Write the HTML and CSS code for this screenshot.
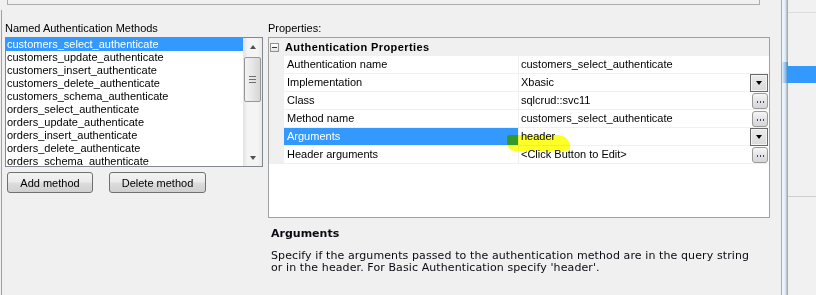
FILE: index.html
```html
<!DOCTYPE html>
<html lang="en">
<head>
  <meta charset="UTF-8" />
  <title>Named Authentication Methods</title>
  <link rel="stylesheet" href="styles.css">
</head>
<body>
  <div class="window">
    <div class="main">
      <div class="topbox"></div>

      <div class="panes">
        <!-- Left: list of methods -->
        <div class="methods">
          <div class="label">Named Authentication Methods</div>
          <div class="listbox">
            <ul class="items">
              <li class="selected">customers_select_authenticate</li>
              <li>customers_update_authenticate</li>
              <li>customers_insert_authenticate</li>
              <li>customers_delete_authenticate</li>
              <li>customers_schema_authenticate</li>
              <li>orders_select_authenticate</li>
              <li>orders_update_authenticate</li>
              <li>orders_insert_authenticate</li>
              <li>orders_delete_authenticate</li>
              <li>orders_schema_authenticate</li>
            </ul>
            <div class="vscroll">
              <div class="arrow"><span class="tri up"></span></div>
              <div class="track"><div class="thumb"><span></span><span></span><span></span></div></div>
              <div class="arrow"><span class="tri down"></span></div>
            </div>
          </div>
          <div class="buttons">
            <button class="btn add">Add method</button>
            <button class="btn delete">Delete method</button>
          </div>
        </div>

        <!-- Right: property grid -->
        <div class="props">
          <div class="label">Properties:</div>
          <div class="grid">
            <div class="category"><span class="toggle"></span>Authentication Properties</div>
            <div class="row">
              <div class="gutter"></div>
              <div class="name">Authentication name</div>
              <div class="value">customers_select_authenticate</div>
            </div>
            <div class="row">
              <div class="gutter"></div>
              <div class="name">Implementation</div>
              <div class="value">Xbasic <span class="drop"><span class="tri down dark"></span></span></div>
            </div>
            <div class="row">
              <div class="gutter"></div>
              <div class="name">Class</div>
              <div class="value">sqlcrud::svc11 <span class="dots"><i></i><i></i><i></i></span></div>
            </div>
            <div class="row">
              <div class="gutter"></div>
              <div class="name">Method name</div>
              <div class="value">customers_select_authenticate <span class="dots"><i></i><i></i><i></i></span></div>
            </div>
            <div class="row selected">
              <div class="gutter"></div>
              <div class="name">Arguments</div>
              <div class="value">header <span class="drop"><span class="tri down dark"></span></span></div>
            </div>
            <div class="row">
              <div class="gutter"></div>
              <div class="name">Header arguments</div>
              <div class="value">&lt;Click Button to Edit&gt; <span class="dots"><i></i><i></i><i></i></span></div>
            </div>
            <!-- highlighter stroke over the value -->
            <div class="marker"></div>
          </div>

          <div class="help">
            <div class="help-title">Arguments</div>
            <p>Specify if the arguments passed to the authentication method are in the query string<br>or in the header. For Basic Authentication specify 'header'.</p>
          </div>
        </div>
      </div>
    </div>

    <div class="splitter"><div class="glow"></div></div>

    <div class="side">
      <div class="side-head"></div>
      <div class="side-sel"></div>
      <div class="side-foot"></div>
    </div>
  </div>
</body>
</html>
```

FILE: styles.css
```css
* {
  box-sizing: border-box;
}

body {
  margin: 0;
  background: #f0f0f0;
  color: #000;
  font-family: "Liberation Sans", Arial, sans-serif;
  font-size: 11px;
}

.window {
  display: flex;
  width: 816px;
  height: 295px;
  overflow: hidden;
}

.main {
  flex: none;
  width: 782px;
  border-right: 1px solid #a9a9a9;
}

.topbox {
  margin-left: 7px;
  width: 753px;
  height: 5px;
  border: 1px solid #adadad;
  border-top: none;
}

.panes {
  display: flex;
  height: 285px;
  margin: 5px 0 0 1px;
  padding-top: 12px;
  border-left: 1px solid #a0a0a0;
}

.label {
  height: 13px;
  line-height: 13px;
  margin-bottom: 2px;
  white-space: nowrap;
}

/* Methods list */
.methods {
  flex: none;
  width: 263px;
  padding-left: 3px;
}

.listbox {
  display: flex;
  width: 258px;
  height: 130px;
  border: 1px solid #828790;
  background: #fff;
}

.items {
  flex: 1;
  margin: 0;
  padding: 0;
  list-style: none;
  overflow: hidden;
}

.items li {
  height: 13px;
  line-height: 13px;
  padding-left: 1px;
  white-space: nowrap;
}

.items li.selected {
  background: #3399ff;
  color: #fff;
}

.vscroll {
  display: flex;
  flex-direction: column;
  width: 19px;
  background: linear-gradient(to right, #e2e2e2, #f4f4f4 25%, #f4f4f4 75%, #e9e9e9);
}

.arrow {
  display: flex;
  align-items: center;
  justify-content: center;
  height: 17px;
}

.track {
  flex: 1;
  padding: 2px 1px 0;
}

.thumb {
  display: flex;
  flex-direction: column;
  align-items: center;
  justify-content: center;
  gap: 2px;
  height: 45px;
  border: 1px solid #979797;
  border-radius: 2px;
  background: linear-gradient(to right, #f3f3f3, #e6e6e6 50%, #d6d6d6);
}

.thumb span {
  width: 7px;
  height: 1px;
  background: #6f6f6f;
}

.tri {
  width: 0;
  height: 0;
  border-left: 3.5px solid transparent;
  border-right: 3.5px solid transparent;
}

.tri.up {
  border-bottom: 4px solid #505050;
}

.tri.down {
  border-top: 4px solid #505050;
}

.tri.dark {
  border-top-color: #000;
}

.buttons {
  display: flex;
  gap: 16px;
  margin: 5px 0 0 2px;
}

.btn {
  height: 21px;
  padding: 0;
  border: 1px solid #707070;
  border-radius: 3px;
  background: linear-gradient(#f3f3f3, #ebebeb 48%, #dddddd 52%, #d0d0d0);
  color: #000;
  font: inherit;
}

.btn.add {
  width: 86px;
}

.btn.delete {
  width: 97px;
}

/* Property grid */
.props {
  flex: none;
  width: 502px;
  margin-left: 3px;
}

.grid {
  position: relative;
  height: 181px;
  border: 1px solid #a0a0a0;
  background: #fff;
}

.category {
  display: flex;
  align-items: center;
  height: 18px;
  background: #f0f0f0;
  font-weight: bold;
  letter-spacing: 0.4px;
}

.toggle {
  position: relative;
  width: 9px;
  height: 9px;
  margin: 0 6px 0 1px;
  border: 1px solid #919191;
  background: linear-gradient(#ffffff, #e3e3e3);
}

.toggle::after {
  content: "";
  position: absolute;
  left: 1px;
  top: 3px;
  width: 5px;
  height: 1px;
  background: #3a3a3a;
}

.row {
  display: flex;
  height: 18px;
  line-height: 17px;
}

.gutter {
  width: 15px;
  background: #f0f0f0;
}

.name {
  width: 234px;
  padding-left: 3px;
  border-bottom: 1px solid #f0f0f0;
  white-space: nowrap;
}

.value {
  display: flex;
  align-items: center;
  justify-content: space-between;
  flex: 1;
  padding: 0 1px 0 2px;
  border-left: 1px solid #f0f0f0;
  border-bottom: 1px solid #f0f0f0;
  white-space: nowrap;
}

.row.selected .name {
  background: #3399ff;
  color: #fff;
}

.dots {
  display: flex;
  align-items: flex-end;
  justify-content: center;
  gap: 2px;
  width: 16px;
  height: 16px;
  padding-bottom: 5px;
  border: 1px solid #999;
  border-radius: 3px;
  background: linear-gradient(#f6f6f6, #e4e4e4 50%, #d6d6d6);
}

.dots i {
  width: 1px;
  height: 2px;
  background: #4a3c7a;
}

.drop {
  display: flex;
  align-items: center;
  justify-content: center;
  width: 18px;
  height: 18px;
  margin-bottom: -1px;
  border: 1px solid #6a6a6a;
  box-shadow: inset 0 0 0 1px #f4f4f4;
  background: linear-gradient(#ececec, #d9d9d9);
}

.marker {
  position: absolute;
  left: 238px;
  top: 97px;
  width: 63px;
  height: 16px;
  border-radius: 3px 12px 4px 8px;
  background: #ffff10;
  opacity: 0.9;
  mix-blend-mode: multiply;
  filter: blur(0.6px);
}

/* Help text */
.help {
  padding: 9px 0 0 3px;
  color: #0a0a14;
  font-family: "DejaVu Sans", Verdana, sans-serif;
  font-size: 11px;
}

.help-title {
  font-weight: bold;
  line-height: 13px;
}

.help p {
  margin: 10px 0 0;
  line-height: 12px;
  letter-spacing: 0.1px;
  white-space: nowrap;
}

/* Right-hand neighbour panel */
.splitter {
  flex: none;
  width: 6px;
  background: linear-gradient(to right, #f4f9fd, #dcebf8 55%, #9a9a9a);
}

.glow {
  height: 21px;
  margin-top: 62px;
  background: linear-gradient(to right, #e3f1fc, #7fbdf2 60%, #5f7f9a);
}

.side {
  flex: 1;
  background: #f1f1f1;
}

.side-head {
  height: 13px;
  border-bottom: 1px solid #dcdcdc;
}

.side-sel {
  height: 17px;
  margin-top: 53px;
  background: #3399ff;
}

.side-foot {
  margin-top: 113px;
  border-top: 1px solid #cfcfcf;
}
```
